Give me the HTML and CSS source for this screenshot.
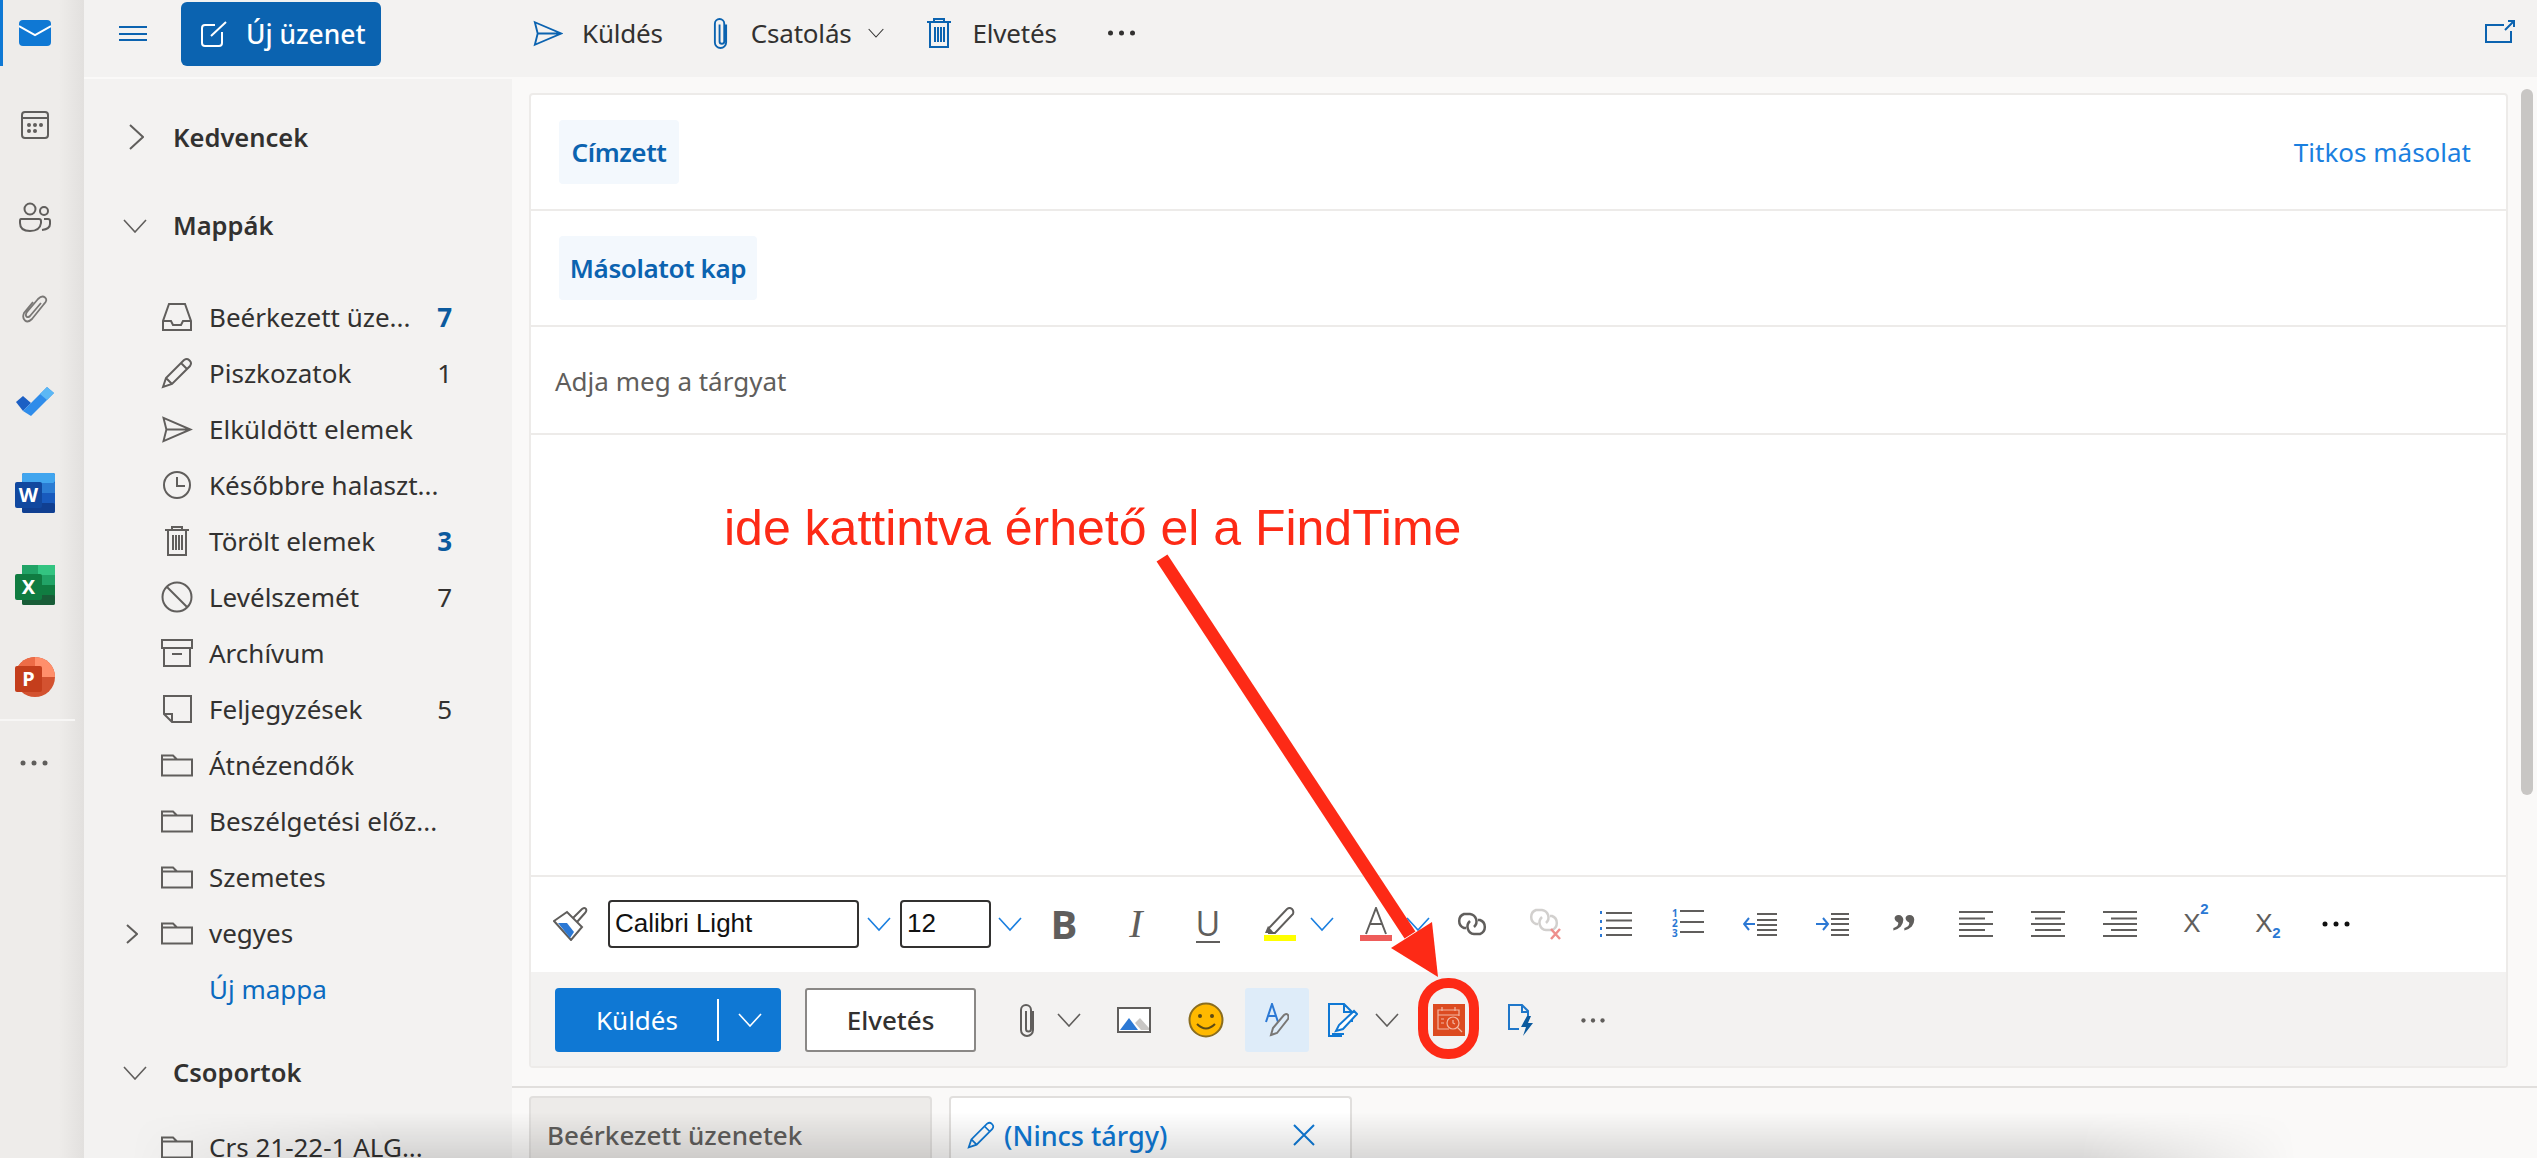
FILE: index.html
```html
<!DOCTYPE html>
<html lang="hu">
<head>
<meta charset="utf-8">
<title>Outlook</title>
<link rel="stylesheet" href="styles.css">
</head>
<body>
<svg class="defs" width="0" height="0" aria-hidden="true">
  <symbol id="folder" viewBox="0 0 32 24"><path d="M1 2.500h11l4 4h15v16H1z M1 6.500h15" fill="none" stroke="#605e5c" stroke-width="2"/></symbol>
  <symbol id="chev" viewBox="0 0 24 14"><path d="M1 1l11 12L23 1" fill="none" stroke="currentColor" stroke-width="1.600"/></symbol>
  <symbol id="dots" viewBox="0 0 30 8"><circle cx="4" cy="4" r="2.500"/><circle cx="15" cy="4" r="2.500"/><circle cx="26" cy="4" r="2.500"/></symbol>
  <symbol id="clip" viewBox="0 0 16 34"><path d="M14 8v19a6 6 0 0 1-12 0V7a5 5 0 0 1 10 0v19a2.500 2.500 0 0 1-5 0V8" fill="none" stroke="currentColor" stroke-width="2"/></symbol>
  <symbol id="send" viewBox="0 0 32 28"><path d="M2 2l28 12L2 26l3-12zM5 14h25" fill="none" stroke="currentColor" stroke-width="2"/></symbol>
  <symbol id="trash" viewBox="0 0 26 32"><path d="M1 5h24M8 5V2h10v3M4 5v25h18V5M9 10v15M12 10v15M15 10v15M18 10v15" fill="none" stroke="currentColor" stroke-width="2"/></symbol>
  <symbol id="pencil" viewBox="0 0 32 32"><path d="M2 30l3-9L23 3q3-2 5 0l1 1q2 2 0 5L11 27zM5 21l6 6M20 6l6 6" fill="none" stroke="currentColor" stroke-width="2"/></symbol>
</svg>

<div class="app">
  <aside class="rail">
    <ul class="rail-list">
      <li class="rail-item rail-active">
        <svg width="32" height="26" viewBox="0 0 32 26"><rect width="32" height="26" rx="4" fill="#0f78d4"/><path d="M0 6l16 9 16-9" fill="none" stroke="#fff" stroke-width="2"/></svg>
      </li>
      <li class="rail-item">
        <svg width="28" height="28" viewBox="0 0 28 28"><rect x="1" y="1" width="26" height="26" rx="3" fill="none" stroke="#605e5c" stroke-width="2"/><path d="M1 7h26" stroke="#605e5c" stroke-width="2"/><g fill="#605e5c"><circle cx="8" cy="14" r="2"/><circle cx="14" cy="14" r="2"/><circle cx="20" cy="14" r="2"/><circle cx="8" cy="20" r="2"/><circle cx="14" cy="20" r="2"/></g></svg>
      </li>
      <li class="rail-item">
        <svg width="32" height="30" viewBox="0 0 32 30"><g fill="none" stroke="#605e5c" stroke-width="2"><circle cx="11" cy="7" r="5.500"/><circle cx="25" cy="9" r="4"/><path d="M2 17h18a2 2 0 0 1 2 2v2q-1 8-11 8T1 21v-2q0-2 1-2zM25 17h4q2 0 2 2v3q0 5-8 6"/></g></svg>
      </li>
      <li class="rail-item">
        <svg width="26" height="30" viewBox="0 0 26 30"><path d="M19 9L8 22q-2 2-3.500 .5T5 18L16 5q4-4 7-1.500T22 10L10 25q-4 4-7 1.500T2 19L11 8" fill="none" stroke="#797775" stroke-width="1.800"/></svg>
      </li>
      <li class="rail-item">
        <svg width="38" height="30" viewBox="0 0 38 30"><path d="M0 16l7-6 8 7-8 8z" fill="#1c5fc4"/><path d="M7 25l8-8L31 1l7 6L15 30z" fill="#2f8cea"/><path d="M24 8l7-7 7 6-7 7z" fill="#5cb8f5"/></svg>
      </li>
      <li class="rail-item">
        <svg width="40" height="40" viewBox="0 0 40 40"><rect x="7" width="33" height="40" rx="2" fill="#185abd"/><rect x="7" width="33" height="10" rx="2" fill="#41a5ee"/><rect x="7" y="10" width="33" height="10" fill="#2b7cd3"/><rect x="7" y="30" width="33" height="10" rx="2" fill="#103f91"/><rect y="9" width="27" height="26" rx="2" fill="#11489f"/><text x="13.500" y="29" class="office-letter">W</text></svg>
      </li>
      <li class="rail-item">
        <svg width="40" height="40" viewBox="0 0 40 40"><rect x="7" width="33" height="40" rx="2" fill="#107c41"/><rect x="22" width="18" height="10" fill="#33c481"/><rect x="7" width="16" height="10" fill="#21a366"/><rect x="22" y="10" width="18" height="10" fill="#21a366"/><rect x="7" y="30" width="33" height="10" rx="2" fill="#185c37"/><rect y="9" width="27" height="26" rx="2" fill="#107c41"/><text x="13.500" y="29" class="office-letter">X</text></svg>
      </li>
      <li class="rail-item">
        <svg width="40" height="40" viewBox="0 0 40 40"><circle cx="20" cy="20" r="20" fill="#d35230"/><path d="M20 0a20 20 0 0 1 20 20H20z" fill="#ff8f6b"/><path d="M20 0v20H0A20 20 0 0 1 20 0z" fill="#ed6c47"/><rect y="9" width="27" height="26" rx="2" fill="#c43e1c"/><text x="13.500" y="29" class="office-letter">P</text></svg>
      </li>
    </ul>
    <div class="rail-sep"></div>
    <div class="rail-more"><svg class="ico-grey" width="32" height="8"><use href="#dots"/></svg></div>
  </aside>

  <div class="workspace">
    <header class="topbar">
      <div class="top-left">
        <button class="ham" aria-label="Menü"><span></span><span></span><span></span></button>
        <div class="new-msg">
          <svg width="26" height="26" viewBox="0 0 26 26"><path d="M14 4H4a3 3 0 0 0-3 3v15a3 3 0 0 0 3 3h14a3 3 0 0 0 3-3V11M10 15L25 1" fill="none" stroke="#fff" stroke-width="2"/></svg>
          <span>Új üzenet</span>
        </div>
      </div>
      <div class="top-actions">
        <svg class="ico-blue" width="30" height="27"><use href="#send"/></svg><span class="top-label t1">Küldés</span>
        <svg class="ico-blue i2" width="15" height="32"><use href="#clip"/></svg><span class="top-label t2">Csatolás</span>
        <svg class="ico-top-chev i3" width="16" height="10"><use href="#chev"/></svg>
        <svg class="ico-blue i4" width="26" height="32"><use href="#trash"/></svg><span class="top-label t3">Elvetés</span>
        <svg class="ico-top-dots i5" width="31" height="8"><use href="#dots"/></svg>
      </div>
      <svg class="popout" width="30" height="23" viewBox="0 0 30 23"><path d="M19 5H1v17h25V11M20 10L29 1M23 1h6v6" fill="none" stroke="#0b63b0" stroke-width="2"/></svg>
    </header>

    <div class="below">
      <nav class="nav">
        <div class="nav-head">
          <svg class="nh-ico right" width="15" height="26" viewBox="0 0 15 26"><path d="M1 1l13 12L1 25" fill="none" stroke="#605e5c" stroke-width="2"/></svg>
          <span>Kedvencek</span>
        </div>
        <div class="nav-head gap-head">
          <svg class="nh-ico" width="26" height="14"><use href="#chev"/></svg>
          <span>Mappák</span>
        </div>
        <ul class="folders">
          <li class="folder"><svg width="30" height="28" viewBox="0 0 30 28"><path d="M7 1h16l6 17v9H1v-9zM1 18h8l2 4h8l2-4h8" fill="none" stroke="#605e5c" stroke-width="2"/></svg><span class="fname">Beérkezett üze...</span><b class="count">7</b></li>
          <li class="folder"><svg class="ico-grey-line" width="32" height="32"><use href="#pencil"/></svg><span class="fname">Piszkozatok</span><span class="count plain">1</span></li>
          <li class="folder"><svg class="ico-grey-line" width="31" height="27"><use href="#send"/></svg><span class="fname">Elküldött elemek</span></li>
          <li class="folder"><svg width="30" height="30" viewBox="0 0 30 30"><circle cx="15" cy="15" r="13" fill="none" stroke="#605e5c" stroke-width="2"/><path d="M15 7v9h8" fill="none" stroke="#605e5c" stroke-width="2"/></svg><span class="fname">Későbbre halaszt...</span></li>
          <li class="folder"><svg class="ico-grey-line" width="26" height="32"><use href="#trash"/></svg><span class="fname">Törölt elemek</span><b class="count">3</b></li>
          <li class="folder"><svg width="32" height="32" viewBox="0 0 32 32"><circle cx="16" cy="16" r="14.500" fill="none" stroke="#605e5c" stroke-width="2"/><path d="M6 6l20 20" stroke="#605e5c" stroke-width="2"/></svg><span class="fname">Levélszemét</span><span class="count plain">7</span></li>
          <li class="folder"><svg width="32" height="28" viewBox="0 0 32 28"><path d="M1 1h30v8H1zM3 9v18h26V9M11 15h10" fill="none" stroke="#605e5c" stroke-width="2"/></svg><span class="fname">Archívum</span></li>
          <li class="folder"><svg width="30" height="28" viewBox="0 0 30 28"><path d="M2 1h27v26H10l-8-8zM2 19h8v8" fill="none" stroke="#605e5c" stroke-width="2"/></svg><span class="fname">Feljegyzések</span><span class="count plain">5</span></li>
          <li class="folder"><svg width="32" height="24"><use href="#folder"/></svg><span class="fname">Átnézendők</span></li>
          <li class="folder"><svg width="32" height="24"><use href="#folder"/></svg><span class="fname">Beszélgetési előz...</span></li>
          <li class="folder"><svg width="32" height="24"><use href="#folder"/></svg><span class="fname">Szemetes</span></li>
          <li class="folder"><svg class="sub-caret" width="12" height="20" viewBox="0 0 12 20"><path d="M1 1l10 9L1 19" fill="none" stroke="#605e5c" stroke-width="2"/></svg><svg width="32" height="24"><use href="#folder"/></svg><span class="fname">vegyes</span></li>
          <li class="folder link-row"><span class="fname new-folder">Új mappa</span></li>
        </ul>
        <div class="nav-head groups-head">
          <svg class="nh-ico" width="26" height="14"><use href="#chev"/></svg>
          <span>Csoportok</span>
        </div>
        <div class="folder crs"><svg width="32" height="24"><use href="#folder"/></svg><span class="fname">Crs 21-22-1 ALG...</span></div>
      </nav>

      <main class="main">
        <section class="card">
          <div class="row to-row">
            <span class="chip chip-to">Címzett</span>
            <span class="bcc">Titkos másolat</span>
          </div>
          <div class="row cc-row"><span class="chip chip-cc">Másolatot kap</span></div>
          <div class="row subject-row">Adja meg a tárgyat</div>
          <div class="body-area"></div>

          <div class="format-bar">
            <div class="cell brush">
              <svg width="35" height="34" viewBox="0 0 35 34"><path d="M1 14L14 5l15 15-11 13z" fill="#fff" stroke="#605e5c" stroke-width="2"/><path d="M5 16l9 0 7 9-4 6z" fill="#2b78d4"/><path d="M20 11l9-9q3-2 4 0t-1 4l-8 9" fill="none" stroke="#605e5c" stroke-width="2"/></svg>
            </div>
            <div class="field field-font">Calibri Light</div>
            <svg class="ico-blue2 fchev1" width="24" height="18"><use href="#chev"/></svg>
            <div class="field field-size">12</div>
            <svg class="ico-blue2 fchev2" width="24" height="18"><use href="#chev"/></svg>
            <div class="cell fmt-b">B</div>
            <div class="cell fmt-i">I</div>
            <div class="cell fmt-u"><span>U</span></div>
            <div class="cell">
              <svg width="32" height="34" viewBox="0 0 32 34"><path d="M5 21L23 2q3-2 5 0t1 5L11 26l-6 0z" fill="none" stroke="#605e5c" stroke-width="2"/><path d="M4 19l6 7H1z" fill="#605e5c"/><rect y="28" width="32" height="6" fill="#ffff00"/></svg>
            </div>
            <svg class="ico-blue2 tb-chev" width="24" height="18"><use href="#chev"/></svg>
            <div class="cell">
              <svg width="32" height="34" viewBox="0 0 32 34"><path d="M6 27L16 1l10 26M10 17h12" fill="none" stroke="#605e5c" stroke-width="2"/><rect y="28" width="32" height="6" fill="#ee5c5a"/></svg>
            </div>
            <svg class="ico-blue2 tb-chev" width="24" height="18"><use href="#chev"/></svg>
            <div class="cell">
              <svg width="34" height="24" viewBox="0 0 34 24"><g fill="none" stroke="#605e5c" stroke-width="2.500"><path d="M11 16H9A7.500 7.500 0 0 1 9 2h6a7.500 7.500 0 0 1 4 13"/><path d="M23 8h2a7.500 7.500 0 0 1 0 14h-6a7.500 7.500 0 0 1-4-13"/></g></svg>
            </div>
            <div class="cell">
              <svg width="34" height="32" viewBox="0 0 34 32"><g fill="none" stroke="#d2d0ce" stroke-width="2.500"><path d="M11 16H9A7.500 7.500 0 0 1 9 2h6a7.500 7.500 0 0 1 4 13"/><path d="M23 8h2a7.500 7.500 0 0 1 0 14h-6a7.500 7.500 0 0 1-4-13"/></g><path d="M24 21l9 10M33 21l-9 10" stroke="#ee8f8d" stroke-width="2.500"/></svg>
            </div>
            <div class="cell">
              <svg width="32" height="26" viewBox="0 0 32 26"><path d="M1 0v3M1 9v3M1 16v3M1 23v3" stroke="#2b78d4" stroke-width="2"/><path d="M6 2h26M6 9.500h26M6 17h26M6 24h26" stroke="#605e5c" stroke-width="2"/></svg>
            </div>
            <div class="cell">
              <svg width="32" height="30" viewBox="0 0 32 30"><path d="M8 2h24M8 13h24M8 23h24" stroke="#605e5c" stroke-width="2"/><text x="0" y="8" class="mini-num">1</text><text x="0" y="18" class="mini-num">2</text><text x="0" y="28" class="mini-num">3</text></svg>
            </div>
            <div class="cell">
              <svg width="34" height="24" viewBox="0 0 34 24"><path d="M14 2h20M14 8h20M14 13h20M14 18h20M14 23h20" stroke="#605e5c" stroke-width="2"/><rect x="12" y="9" width="3" height="3" fill="#fff"/><path d="M12 12H1M6 6l-5 6 5 6" fill="none" stroke="#2b78d4" stroke-width="2"/></svg>
            </div>
            <div class="cell">
              <svg width="34" height="24" viewBox="0 0 34 24"><path d="M16 2h18M16 7h18M16 12h18M16 18h18M16 23h18" stroke="#605e5c" stroke-width="2"/><path d="M1 12h11M8 6l5 6-5 6" fill="none" stroke="#2b78d4" stroke-width="2"/></svg>
            </div>
            <div class="cell"><span class="quote">”</span></div>
            <div class="cell"><svg width="34" height="26" viewBox="0 0 34 26"><path d="M0 1h34M0 7.500h26M0 13h34M0 19h26M0 25h34" stroke="#605e5c" stroke-width="2"/></svg></div>
            <div class="cell"><svg width="34" height="26" viewBox="0 0 34 26"><path d="M0 1h34M4 7.500h26M0 13h34M4 19h26M0 25h34" stroke="#605e5c" stroke-width="2"/></svg></div>
            <div class="cell"><svg width="34" height="26" viewBox="0 0 34 26"><path d="M0 1h34M8 7.500h26M0 13h34M8 19h26M0 25h34" stroke="#605e5c" stroke-width="2"/></svg></div>
            <div class="cell"><span class="script">X<sup>2</sup></span></div>
            <div class="cell"><span class="script">X<sub>2</sub></span></div>
            <div class="cell"><svg class="ico-black" width="30" height="8"><use href="#dots"/></svg></div>
          </div>

          <div class="send-bar">
            <div class="send-btn"><span class="send-text">Küldés</span><i class="send-div"></i><svg width="24" height="14"><use href="#chev"/></svg></div>
            <div class="discard-btn">Elvetés</div>
            <div class="cell"><svg class="ico-grey-line" width="16" height="34"><use href="#clip"/></svg></div>
            <svg class="ico-dark sb-chev1" width="24" height="14"><use href="#chev"/></svg>
            <div class="cell">
              <svg width="34" height="26" viewBox="0 0 34 26"><rect x="1" y="1" width="32" height="24" fill="#fff" stroke="#605e5c" stroke-width="2"/><path d="M3 23l9-12 9 12z" fill="#2b78d4"/><path d="M18 16l5-5 9 10v2h-8z" fill="#c8c6c4"/></svg>
            </div>
            <div class="cell">
              <svg width="36" height="36" viewBox="0 0 36 36"><circle cx="18" cy="18" r="16.500" fill="#ffb900" stroke="#8a6d1f" stroke-width="2"/><circle cx="12" cy="14" r="2" fill="#5c4a14"/><circle cx="24" cy="14" r="2" fill="#5c4a14"/><path d="M9 22q9 9 18 0" fill="none" stroke="#5c4a14" stroke-width="2"/></svg>
            </div>
            <div class="pen-cell">
              <svg width="24" height="34" viewBox="0 0 24 34"><path d="M1 19L7 1l6 18M3 13h8" fill="none" stroke="#2b78d4" stroke-width="2"/><path d="M6 32l2-7 11-13q3-2 4 0t0 4L12 30z" fill="none" stroke="#797775" stroke-width="2"/></svg>
            </div>
            <div class="doc-cell">
              <svg width="30" height="34" viewBox="0 0 30 34"><path d="M14 33H1V1h15l8 8v10M16 1v8h8M4 31h12" fill="none" stroke="#0f78d4" stroke-width="2"/><path d="M8 28l3-6L26 8l3 3-14 15z" fill="#fff" stroke="#0f78d4" stroke-width="2"/></svg>
            </div>
            <svg class="ico-dark sb-chev2" width="24" height="14"><use href="#chev"/></svg>
            <div class="cell">
              <svg width="32" height="32" viewBox="0 0 32 32"><rect width="32" height="32" fill="#dc4b21"/><g fill="none" stroke="#f3b7a3" stroke-width="1.200"><path d="M16 25H5V6h21v6M5 11h21M9 3v4M22 3v4"/><circle cx="20" cy="19" r="6"/><path d="M20 16v3l2 1M24.500 23.500l4.500 4.500M8 15h3M8 19h3"/></g></svg>
            </div>
            <div class="cell">
              <svg width="26" height="32" viewBox="0 0 26 32"><path d="M11 25H1V1h13l6 6v7M14 1v7h6" fill="none" stroke="#1f77c9" stroke-width="2"/><path d="M19 12l-6 11h5l-3 9 10-13h-5l3-7z" fill="#0b5a9e"/></svg>
            </div>
            <div class="cell"><svg class="ico-grey" width="26" height="7"><use href="#dots"/></svg></div>
          </div>
        </section>

        <div class="tabs">
          <div class="tab tab-off">Beérkezett üzenetek</div>
          <div class="tab tab-on">
            <svg class="ico-link" width="28" height="28"><use href="#pencil"/></svg>
            <span class="tab-title">(Nincs tárgy)</span>
            <svg class="tab-x" width="22" height="22" viewBox="0 0 22 22"><path d="M1 1l20 20M21 1L1 21" stroke="#0f78d4" stroke-width="2"/></svg>
          </div>
        </div>
      </main>
    </div>
  </div>
</div>

<div class="scrollthumb"></div>
<div class="vignette"></div>

<div class="note">ide kattintva érhető el a FindTime</div>
<svg class="arrow" width="2537" height="1158" viewBox="0 0 2537 1158" aria-hidden="true">
  <path d="M1162 558L1410 935" stroke="#fd2a16" stroke-width="13" fill="none"/>
  <path d="M1438 977L1432 922L1391 948z" fill="#fd2a16"/>
  <rect x="1423" y="983" width="51" height="71" rx="25" fill="none" stroke="#fd2a16" stroke-width="10"/>
</svg>
</body>
</html>
```

FILE: styles.css
```css
* { box-sizing: border-box; }
html, body { margin: 0; height: 100%; overflow: hidden; }
body { font-family: "Noto Sans", "Open Sans", sans-serif; color: #323130; background: #faf9f8; position: relative; width: 2537px; height: 1158px; }
ul { list-style: none; margin: 0; padding: 0; }
svg { display: block; flex: none; }
.defs { position: absolute; }

.ico-blue { color: #0b63b0; }
.ico-blue2 { color: #1a7fe0; }
.ico-dark { color: #605e5c; }
.ico-grey { color: #605e5c; fill: #605e5c; }
.ico-grey-line { color: #605e5c; }
.ico-black { color: #111; fill: #111; }
.ico-link { color: #0f78d4; }
.ico-top-chev { color: #323130; }
.ico-top-dots { fill: #323130; }

.app { display: flex; height: 1158px; }

/* left rail */
.rail { width: 84px; flex: none; background: linear-gradient(90deg, #eeecea 70%, #e2e0de 100%); overflow: hidden; }
.rail-list { display: grid; grid-auto-rows: 92px; margin-top: -13px; }
.rail-item { display: flex; align-items: center; justify-content: center; position: relative; padding-right: 14px; }
.rail-active::before { content: ""; position: absolute; left: 0; top: 13px; width: 3px; height: 66px; background: #0f78d4; }
.office-letter { font: 700 20px "Noto Sans", sans-serif; fill: #fff; text-anchor: middle; }
.rail-sep { width: 75px; height: 2px; background: #f7f6f5; margin-top: -4px; }
.rail-more { height: 84px; display: flex; align-items: center; justify-content: center; padding-right: 16px; margin-top: 0; }

.workspace { flex: 1; min-width: 0; display: flex; flex-direction: column; }

/* top bar */
.topbar { height: 77px; flex: none; background: #f3f2f1; display: flex; align-items: center; position: relative; }
.top-left { width: 428px; flex: none; display: flex; align-items: center; }
.ham { width: 28px; height: 15px; margin-left: 35px; padding: 0; border: 0; background: none; display: flex; flex-direction: column; justify-content: space-between; margin-bottom: 10px; }
.ham span { display: block; height: 2px; background: #0b63b0; }
.new-msg { margin-left: 34px; margin-bottom: 10px; width: 200px; height: 64px; border-radius: 6px; background: #0b63b0; color: #fff; display: flex; align-items: center; padding-left: 20px; gap: 19px; font-size: 26.400px; font-weight: 500; }
.top-actions { display: flex; align-items: center; padding-left: 21px; height: 66px; margin-bottom: 11px; }
.top-label { font-size: 26px; color: #323130; letter-spacing: -0.2px; }
.t1 { margin-left: 19px; }
.i2 { margin-left: 50px; }
.t2 { margin-left: 23px; }
.i3 { margin-left: 16px; }
.i4 { margin-left: 42px; }
.t3 { margin-left: 21px; }
.i5 { margin-left: 49px; }
.popout { position: absolute; right: 22px; top: 20px; }

.below { flex: 1; min-height: 0; display: flex; padding-top: 2px; background: #faf9f8; }

/* folder pane */
.nav { width: 428px; flex: none; background: #f3f2f1; padding-top: 30px; overflow: hidden; }
.nav-head { height: 56px; display: flex; align-items: center; font-size: 25.500px; font-weight: 600; position: relative; padding-left: 89px; color: #323130; }
.nh-ico { position: absolute; left: 38px; top: 22px; color: #605e5c; }
.nh-ico.right { left: 45px; top: 15px; }
.gap-head { margin-top: 32px; }
.folders { margin-top: 36px; }
.folder { height: 56px; display: flex; align-items: center; padding-left: 77px; position: relative; font-size: 26px; }
.folder svg:not(.sub-caret) { width: 32px; }
.fname { position: absolute; left: 125px; white-space: nowrap; color: #323130; }
.count { position: absolute; right: 60px; font-size: 26px; font-weight: 700; color: #0b5a9e; }
.count.plain { font-weight: 400; color: #323130; }
.sub-caret { position: absolute; left: 42px; top: 19px; }
.new-folder { color: #0b6abf; }
.groups-head { margin-top: 27px; }
.crs { margin-top: 19px; }

/* compose */
.main { flex: 1; min-width: 0; padding: 14px 0 0 17px; display: flex; flex-direction: column; }
.card { width: 1979px; height: 975px; flex: none; background: #fff; border: 2px solid #edebe9; border-radius: 4px; display: flex; flex-direction: column; }
.row { border-bottom: 2px solid #edebe9; display: flex; align-items: center; flex: none; }
.to-row, .cc-row { height: 116px; padding-left: 28px; }
.to-row { height: 116px; justify-content: space-between; }
.chip { height: 64px; background: #f3f8fd; border-radius: 4px; display: flex; align-items: center; justify-content: center; color: #0b63b0; font-size: 26px; font-weight: 600; letter-spacing: -0.4px; }
.chip-to { width: 120px; }
.chip-cc { width: 198px; }
.bcc { color: #1a7fe0; font-size: 26px; margin-right: 35px; }
.subject-row { height: 108px; padding: 2px 0 0 24px; font-size: 26px; color: #605e5c; }
.body-area { flex: 1; min-height: 0; }

.format-bar { height: 97px; flex: none; border-top: 2px solid #edebe9; display: flex; align-items: center; padding-left: 3px; background: #fff; padding-bottom: 2px; }
.cell { width: 72px; height: 64px; flex: none; display: flex; align-items: center; justify-content: center; }
.field { height: 48px; border: 2px solid #323130; border-radius: 4px; background: #fff; color: #111; font: 26px "Liberation Sans", Arial, sans-serif; display: flex; align-items: center; padding-left: 5px; flex: none; }
.field-font { width: 251px; margin-left: 2px; }
.field-size { width: 91px; }
.fchev1 { margin: 0 9px 0 8px; }
.fchev2 { margin: 0 6px 0 7px; }
.tb-chev { margin: 0 6px 0 -6px; }
.fmt-b { font: 700 40px/1 "Open Sans", sans-serif; color: #605e5c; }
.fmt-i { font: italic 400 40px/1 "Liberation Serif", serif; color: #605e5c; }
.fmt-u span { font: 400 34px "Open Sans", sans-serif; color: #605e5c; border-bottom: 2px solid #605e5c; line-height: 36px; height: 38px; display: block; }
.mini-num { font: 700 10px "Noto Sans", sans-serif; fill: #2b78d4; }
.quote { font: 700 50px/50px "Liberation Serif", serif; color: #605e5c; height: 36px; }
.script { font: 400 26px "Liberation Sans", sans-serif; color: #605e5c; position: relative; }
.script sup, .script sub { font: 700 15px "Liberation Sans", sans-serif; color: #2b78d4; position: absolute; }
.script sup { left: 17px; top: -8px; }
.script sub { left: 17px; top: 16px; }

.send-bar { height: 94px; flex: none; background: #f3f2f1; display: flex; align-items: center; padding: 2px 0 0 24px; }
.send-btn { width: 226px; height: 64px; flex: none; background: #0f78d4; border-radius: 4px; color: #fff; display: flex; align-items: center; }
.send-text { font-size: 26px; margin-left: 41px; width: 121px; }
.send-div { width: 2px; height: 42px; background: #fff; }
.send-btn svg { margin-left: 19px; }
.discard-btn { width: 171px; height: 64px; flex: none; margin-left: 24px; background: #fff; border: 2px solid #8a8886; border-radius: 3px; display: flex; align-items: center; justify-content: center; font-size: 26px; font-weight: 500; }
.send-bar .cell { margin: 0; }
.discard-btn + .cell { margin-left: 15px; }
.sb-chev1 { margin: 0 17px 0 -6px; }
.pen-cell { width: 64px; height: 64px; margin-left: 3px; flex: none; background: #deecf9; border-radius: 3px; display: flex; align-items: center; justify-content: center; }
.doc-cell { width: 68px; flex: none; display: flex; justify-content: center; }
.sb-chev2 { margin: 0 14px 0 -2px; }

/* tabs */
.tabs { flex: 1; margin: 18px -17px 0 -17px; border-top: 2px solid #e1dfdd; padding: 8px 0 0 17px; display: flex; gap: 17px; min-height: 0; }
.tab { width: 403px; border: 2px solid #e1dfdd; border-bottom: 0; border-radius: 4px 4px 0 0; display: flex; align-items: center; font-size: 26px; height: 62px; padding-top: 14px; }
.tab-off { background: #edebe9; color: #605e5c; padding-left: 16px; font-weight: 500; }
.tab-on { background: #fff; position: relative; padding-left: 16px; }
.tab-title { color: #0f78d4; margin-left: 9px; font-size: 27px; font-weight: 500; }
.tab-x { position: absolute; left: 342px; top: 26px; }

/* overlays */
.scrollthumb { position: absolute; left: 2521px; top: 89px; width: 12px; height: 706px; border-radius: 6px; background: #c8c6c4; }
.vignette { position: absolute; left: 130px; right: 240px; bottom: 0; height: 46px; background: linear-gradient(to top, rgba(0, 0, 0, .13), rgba(0, 0, 0, 0)); -webkit-mask-image: linear-gradient(90deg, transparent, #000 12%, #000 90%, transparent); mask-image: linear-gradient(90deg, transparent, #000 12%, #000 90%, transparent); pointer-events: none; }
.note { position: absolute; left: 724px; top: 500px; font: 50px/56px "Liberation Sans", Arial, sans-serif; color: #fd2a16; white-space: nowrap; }
.arrow { position: absolute; left: 0; top: 0; pointer-events: none; }
```
